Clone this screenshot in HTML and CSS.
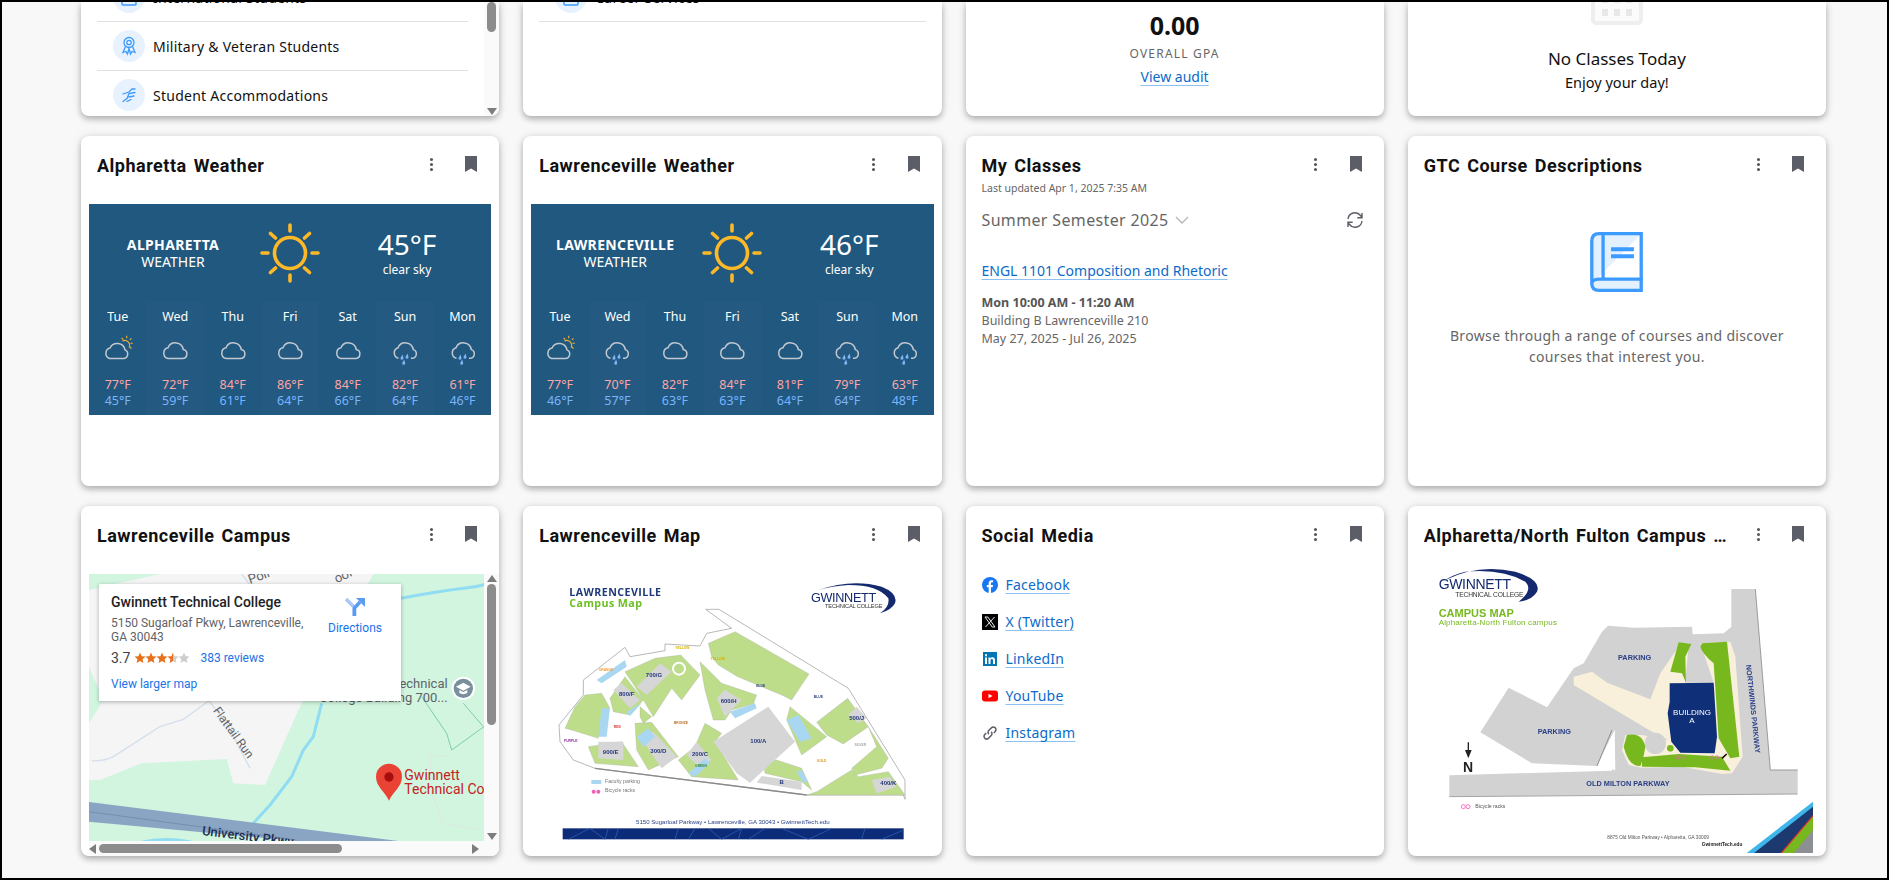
FILE: index.html
```html
<!DOCTYPE html>
<html>
<head>
    <meta charset="UTF-8">
    <title>Student Dashboard</title>
    <link rel="stylesheet" href="styles.css">
</head>
<body>
    <!-- shared icons -->
    <svg class="icon-defs" aria-hidden="true">
        <defs>
            <linearGradient id="halfStar">
                <stop offset="50%" stop-color="#e7711b"/>
                <stop offset="50%" stop-color="#ccc"/>
            </linearGradient>
            <symbol id="bookmark" viewBox="0 0 12 16"><path d="M0 0h12v16l-6-3.4L0 16z" fill="#5b5e66"/></symbol>
            <symbol id="sun" viewBox="0 0 60 60">
                <g fill="none" stroke="#fdb827" stroke-width="3.6" stroke-linecap="round">
                    <circle cx="30" cy="30" r="15.5"/>
                    <path d="M30 2v6M30 52v6M2 30h6M52 30h6M10.5 10.5l5 4.5M44.5 45l5 4.5M10.5 49.5l5-4.5M44.5 15l5-4.5"/>
                </g>
            </symbol>
            <symbol id="cloud" viewBox="0 0 30 30">
                <path d="M8 23.5h14.5a4.5 4.5 0 0 0 .8-8.9a8 8 0 0 0-15.3-1.8a5.5 5.5 0 0 0 0 10.7z" fill="none" stroke="#c2c8cf" stroke-width="1.5"/>
            </symbol>
            <symbol id="partly" viewBox="0 0 30 30">
                <g fill="none" stroke="#f2b233" stroke-width="1.1">
                    <path d="M19.5 6a4.8 4.8 0 0 1 6.500 6.500"/>
                    <path d="M23.7 .8v2.400M29.800 8.300h-2.400M18.600 3l1.600 1.600M28.500 3.300l-1.700 1.600M28.500 13.500l-1.700-1.500"/>
                </g>
                <path d="M6.500 23.500h14a4.500 4.500 0 0 0 1.500-8.600a8 8 0 0 0-15-1.900a5.500 5.500 0 0 0-.5 10.500z" fill="#20587f" stroke="#c2c8cf" stroke-width="1.5"/>
            </symbol>
            <symbol id="rain" viewBox="0 0 30 30">
                <path d="M8.500 23.200a5.400 5.400 0 0 1-.5-10.400a8 8 0 0 1 15.300 1.800a4.500 4.500 0 0 1-.8 8.700h-1.500" fill="none" stroke="#c2c8cf" stroke-width="1.5"/>
                <path d="M12.500 19.500l1 3.500a1.500 1.500 0 1 1-2.900-.3zM17.500 18.500l1 3.500a1.500 1.500 0 1 1-2.900-.3zM14.200 24.500l1 3.500a1.500 1.500 0 1 1-2.900-.3z" fill="#7fb4f5"/>
            </symbol>
            <symbol id="star" viewBox="0 0 12 12"><path d="M6 .6l1.600 3.600l3.900.4l-2.900 2.600l.8 3.900L6 9.100l-3.400 2l.8-3.900L.5 4.600l3.900-.4z"/></symbol>
        </defs>
    </svg>

    <div class="frame">
        <main class="dashboard">

            <!-- row cut off by the scroll position -->
            <section class="card card-cut">
                <div class="cut-row">
                    <ul class="link-list">
                        <li><span class="round-icon"><svg width="18" height="20" viewBox="0 0 18 20"><rect x="2" y="2" width="14" height="16" rx="1" fill="none" stroke="#3b9bff" stroke-width="1.5"/></svg></span>International Students</li>
                        <li><span class="round-icon"><svg width="16" height="20" viewBox="0 0 16 20" fill="none" stroke="#3b9bff" stroke-width="1.3"><circle cx="8" cy="6.5" r="5"/><circle cx="8" cy="6.5" r="2.2"/><path d="M4.500 10.500l-2.500 6l3-1l1.500 2.500l1.500-5.500l1.500 5.500l1.500-2.500l3 1l-2.500-6"/></svg></span>Military &amp; Veteran Students</li>
                        <li><span class="round-icon"><svg width="18" height="18" viewBox="0 0 18 18" fill="none" stroke="#3b9bff" stroke-width="1.3" stroke-linecap="round"><path d="M3 8l6-2l3-3l3 0M15 6.500l-6 1l-2 5l-4 3M9 11l5-1M7 15.500l4-2"/></svg></span>Student Accommodations</li>
                    </ul>
                    <div class="scrollbar-v">
                        <span class="thumb-v thumb-top"></span>
                        <span class="arrow-down"></span>
                    </div>
                </div>
            </section>

            <section class="card card-cut">
                <ul class="link-list">
                    <li><span class="round-icon"><svg width="18" height="20" viewBox="0 0 18 20"><rect x="2" y="2" width="14" height="16" rx="1" fill="none" stroke="#3b9bff" stroke-width="1.5"/></svg></span>Career Services</li>
                </ul>
            </section>

            <section class="card card-cut gpa">
                <div class="gpa-value">0.00</div>
                <div class="gpa-label">OVERALL GPA</div>
                <a class="link gpa-link" href="#">View audit</a>
            </section>

            <section class="card card-cut today">
                <svg class="today-icon" width="52" height="52" viewBox="0 0 52 52">
                    <rect x="2" y="2" width="48" height="48" rx="3" fill="#fbfbfb" stroke="#eeeeee" stroke-width="4"/>
                    <path d="M11 23h6v7h-6zM23 23h6v7h-6zM35 23h6v7h-6zM11 36h6v7h-6zM23 36h6v7h-6zM35 36h6v7h-6z" fill="#e8e8e8"/>
                </svg>
                <div class="today-title">No Classes Today</div>
                <div class="today-sub">Enjoy your day!</div>
            </section>

            <!-- weather row -->
            <section class="card">
                <header class="card-head">
                    <h2 class="card-title">Alpharetta Weather</h2>
                    <span class="head-btn"><span class="kebab"></span></span>
                    <span class="head-btn"><svg width="12" height="16"><use href="#bookmark"/></svg></span>
                </header>
                <div class="weather">
                    <div class="weather-now">
                        <div class="weather-place"><strong>ALPHARETTA</strong><span>WEATHER</span></div>
                        <svg width="60" height="60"><use href="#sun"/></svg>
                        <div class="weather-temp"><b>45°F</b><span>clear sky</span></div>
                    </div>
                    <div class="weather-days">
                        <div class="day"><span class="day-name">Tue</span><svg width="30" height="30"><use href="#partly"/></svg><span class="hi">77°F</span><span class="lo">45°F</span></div>
                        <div class="day"><span class="day-name">Wed</span><svg width="30" height="30"><use href="#cloud"/></svg><span class="hi">72°F</span><span class="lo">59°F</span></div>
                        <div class="day"><span class="day-name">Thu</span><svg width="30" height="30"><use href="#cloud"/></svg><span class="hi">84°F</span><span class="lo">61°F</span></div>
                        <div class="day"><span class="day-name">Fri</span><svg width="30" height="30"><use href="#cloud"/></svg><span class="hi">86°F</span><span class="lo">64°F</span></div>
                        <div class="day"><span class="day-name">Sat</span><svg width="30" height="30"><use href="#cloud"/></svg><span class="hi">84°F</span><span class="lo">66°F</span></div>
                        <div class="day"><span class="day-name">Sun</span><svg width="30" height="30"><use href="#rain"/></svg><span class="hi">82°F</span><span class="lo">64°F</span></div>
                        <div class="day"><span class="day-name">Mon</span><svg width="30" height="30"><use href="#rain"/></svg><span class="hi">61°F</span><span class="lo">46°F</span></div>
                    </div>
                </div>
            </section>

            <section class="card">
                <header class="card-head">
                    <h2 class="card-title">Lawrenceville Weather</h2>
                    <span class="head-btn"><span class="kebab"></span></span>
                    <span class="head-btn"><svg width="12" height="16"><use href="#bookmark"/></svg></span>
                </header>
                <div class="weather">
                    <div class="weather-now">
                        <div class="weather-place"><strong>LAWRENCEVILLE</strong><span>WEATHER</span></div>
                        <svg width="60" height="60"><use href="#sun"/></svg>
                        <div class="weather-temp"><b>46°F</b><span>clear sky</span></div>
                    </div>
                    <div class="weather-days">
                        <div class="day"><span class="day-name">Tue</span><svg width="30" height="30"><use href="#partly"/></svg><span class="hi">77°F</span><span class="lo">46°F</span></div>
                        <div class="day"><span class="day-name">Wed</span><svg width="30" height="30"><use href="#rain"/></svg><span class="hi">70°F</span><span class="lo">57°F</span></div>
                        <div class="day"><span class="day-name">Thu</span><svg width="30" height="30"><use href="#cloud"/></svg><span class="hi">82°F</span><span class="lo">63°F</span></div>
                        <div class="day"><span class="day-name">Fri</span><svg width="30" height="30"><use href="#cloud"/></svg><span class="hi">84°F</span><span class="lo">63°F</span></div>
                        <div class="day"><span class="day-name">Sat</span><svg width="30" height="30"><use href="#cloud"/></svg><span class="hi">81°F</span><span class="lo">64°F</span></div>
                        <div class="day"><span class="day-name">Sun</span><svg width="30" height="30"><use href="#rain"/></svg><span class="hi">79°F</span><span class="lo">64°F</span></div>
                        <div class="day"><span class="day-name">Mon</span><svg width="30" height="30"><use href="#rain"/></svg><span class="hi">63°F</span><span class="lo">48°F</span></div>
                    </div>
                </div>
            </section>

            <section class="card">
                <header class="card-head">
                    <div class="title-wrap">
                        <h2 class="card-title">My Classes</h2>
                        <div class="updated">Last updated Apr 1, 2025 7:35 AM</div>
                    </div>
                    <span class="head-btn"><span class="kebab"></span></span>
                    <span class="head-btn"><svg width="12" height="16"><use href="#bookmark"/></svg></span>
                </header>
                <div class="classes">
                    <div class="semester">
                        <span class="semester-name">Summer Semester 2025</span>
                        <svg width="14" height="8" viewBox="0 0 14 8"><path d="M1 1l6 6l6-6" fill="none" stroke="#b5b5b5" stroke-width="1.3"/></svg>
                        <svg class="refresh" width="18" height="18" viewBox="0 0 18 18" fill="none" stroke="#5b5e66" stroke-width="1.4"><path d="M2 8a7 7 0 0 1 12.500-3.500l1.500 2M16 2v4.700h-4.700"/><path d="M16 10a7 7 0 0 1-12.500 3.500L2 11.500M2 16v-4.700h4.700"/></svg>
                    </div>
                    <a class="link class-link" href="#">ENGL 1101 Composition and Rhetoric</a>
                    <div class="class-time">Mon 10:00 AM - 11:20 AM</div>
                    <div class="class-info">Building B Lawrenceville 210</div>
                    <div class="class-info">May 27, 2025 - Jul 26, 2025</div>
                </div>
            </section>

            <section class="card">
                <header class="card-head">
                    <h2 class="card-title">GTC Course Descriptions</h2>
                    <span class="head-btn"><span class="kebab"></span></span>
                    <span class="head-btn"><svg width="12" height="16"><use href="#bookmark"/></svg></span>
                </header>
                <div class="courses">
                    <svg width="53" height="60" viewBox="573 305 159 181">
                        <path d="M727 310H600Q578 310 578 332V460Q578 481 600 481H727V447H600Q578 447 578 462" fill="#e3f0ff" stroke="#3b9bff" stroke-width="10"/>
                        <path d="M727 305V450M612 310V447" stroke="#3b9bff" stroke-width="10" fill="none"/>
                        <path d="M636 351h69v12h-69zM636 372h69v12h-69z" fill="#3b9bff"/>
                    </svg>
                    <p>Browse through a range of courses and discover courses that interest you.</p>
                </div>
            </section>

            <!-- bottom row -->
            <section class="card">
                <header class="card-head">
                    <h2 class="card-title">Lawrenceville Campus</h2>
                    <span class="head-btn"><span class="kebab"></span></span>
                    <span class="head-btn"><svg width="12" height="16"><use href="#bookmark"/></svg></span>
                </header>
                <div class="map-frame">
                    <div class="map-view">
                        <svg class="map-art" width="395" height="267" viewBox="57 42 1185 801">
                            <rect x="57" y="42" width="1185" height="801" fill="#d1f5df"/>
                            <path d="M270 42H910L690 440L585 675L490 670L470 597L215 610L90 660H57V490L100 420L57 320V90z" fill="#f5f5f5"/>
                            <path d="M65 602Q100 605 130 590L270 500L340 478L420 420M415 420L470 490L540 625M515 42L540 75" fill="none" stroke="#d5dfec" stroke-width="4"/>
                            <path d="M993 115Q1100 95 1180 85T1242 68M755 430L730 530L700 570L665 650L600 735L550 790" fill="none" stroke="#8fdcf3" stroke-width="9"/>
                            <path d="M210 843Q290 825 370 843z" fill="#8fdcf3"/>
                            <path d="M1055 410L1130 520L1145 570L1242 500M1180 430L1240 500" fill="none" stroke="#6cc5a0" stroke-width="2.5"/>
                            <path d="M1080 585L1145 590M1080 585L1085 700L1110 760V790L1242 810" fill="none" stroke="#dfe8e2" stroke-width="3"/>
                            <path d="M57 726L985 843H680L57 785z" fill="#8aa5c4"/>
                            <path d="M57 755L680 840" stroke="#7189a8" stroke-width="2.5"/>
                            <text class="map-label" x="540" y="72" transform="rotate(-20 540 72)">Poll</text>
                            <text class="map-label" x="800" y="70" transform="rotate(-25 800 70)">ool</text>
                            <text class="map-label map-label-small" x="428" y="452" transform="rotate(54 428 452)">Flattail Run</text>
                            <text class="map-road" x="395" y="825" transform="rotate(7 395 825)">University Pkwy</text>
                            <text class="map-label" x="1133" y="385" text-anchor="end">Technical</text>
                            <text class="map-label" x="1133" y="426" text-anchor="end">College Building 700...</text>
                            <circle cx="1180" cy="385" r="35" fill="#fff"/>
                            <circle cx="1180" cy="385" r="29" fill="#78909c"/>
                            <path d="M1180 368L1202 380L1180 392L1158 380zM1168 390V399Q1180 406 1192 399V390L1180 396z" fill="#fff"/>
                            <path d="M957 722C945 695 918 680 918 650A39 39 0 0 1 996 650C996 680 969 695 957 722z" fill="#ea4335"/>
                            <circle cx="957" cy="651" r="14" fill="#a50e0e"/>
                            <text class="map-red" x="1003" y="660">Gwinnett</text>
                            <text class="map-red" x="1003" y="702">Technical College</text>
                        </svg>
                        <div class="map-info">
                            <div class="map-info-main">
                                <div class="place-name">Gwinnett Technical College</div>
                                <div class="place-addr">5150 Sugarloaf Pkwy, Lawrenceville, GA 30043</div>
                                <div class="place-rating">
                                    <span class="rating-num">3.7</span>
                                    <svg class="stars" width="55" height="12" viewBox="0 0 55 12">
                                        <use href="#star" width="12" height="12" fill="#e7711b"/>
                                        <use href="#star" x="11" width="12" height="12" fill="#e7711b"/>
                                        <use href="#star" x="22" width="12" height="12" fill="#e7711b"/>
                                        <use href="#star" x="33" width="12" height="12" fill="url(#halfStar)"/>
                                        <use href="#star" x="44" width="12" height="12" fill="#ccc"/>
                                    </svg>
                                    <a class="map-link" href="#">383 reviews</a>
                                </div>
                                <a class="map-link larger" href="#">View larger map</a>
                            </div>
                            <div class="directions">
                                <svg width="20" height="20" viewBox="0 0 20 20">
                                    <path d="M1 2L9 10V19" fill="none" stroke="#a8c7fa" stroke-width="3.5"/>
                                    <path d="M9.500 19V11L15 5" fill="none" stroke="#5b9cf0" stroke-width="3.5"/>
                                    <path d="M11 1h9v9z" fill="#5b9cf0"/>
                                </svg>
                                <a class="map-link" href="#">Directions</a>
                            </div>
                        </div>
                    </div>
                    <div class="scrollbar-v">
                        <span class="arrow-up"></span>
                        <span class="thumb-v thumb-map"></span>
                        <span class="arrow-down"></span>
                    </div>
                    <div class="scrollbar-h">
                        <span class="arrow-left"></span>
                        <span class="thumb-h"></span>
                        <span class="arrow-right"></span>
                    </div>
                </div>
            </section>

            <section class="card">
                <header class="card-head">
                    <h2 class="card-title">Lawrenceville Map</h2>
                    <span class="head-btn"><span class="kebab"></span></span>
                    <span class="head-btn"><svg width="12" height="16"><use href="#bookmark"/></svg></span>
                </header>
                <div class="map-image">
                    <svg width="403" height="288" viewBox="48 15 1209 864">
                        <text class="lv-head" x="163" y="108" fill="#1f3a7a">LAWRENCEVILLE</text>
                        <text class="lv-head" x="163" y="140" fill="#6cbf20">Campus Map</text>
                        <path d="M910 90Q1010 55 1100 80Q1150 100 1140 130Q1130 150 1095 160Q1125 140 1120 115Q1090 75 1000 75Q950 78 910 90z" fill="#14296e"/>
                        <text class="logo-big logo-lv" x="888" y="125">GWINNETT</text>
                        <text class="logo-small" x="930" y="145">TECHNICAL COLLEGE</text>

                        <path d="M572 148H612L1000 385L1170 660V718L1165 705H875L240 625L175 600L135 545L132 495L205 405V360L330 262L345 290L450 272V252L555 258L575 220L650 205z" fill="#fff" stroke="#a9a9a9" stroke-width="2.5"/>
                        <path d="M240 625L875 705" stroke="#8a8a8a" stroke-width="4"/>
                        <g fill="#bedd8a" stroke="#a9a9a9" stroke-width="1">
                            <path d="M580 250L660 215L882 342L830 420L800 405L668 350L610 315L590 290z"/>
                            <path d="M905 487L998 415L1060 500L985 552L935 525z"/>
                            <path d="M1060 500L1120 595L1100 625L1020 645L1010 625L1085 560z"/>
                            <path d="M905 695L1010 630L1030 650L1120 635L1170 705H875z"/>
                            <path d="M330 335L420 295L497 285L555 345L500 420L470 385L415 470L385 420L360 380z"/>
                            <path d="M555 305L620 370L725 405L715 432L650 450L630 480L595 480L570 390z"/>
                            <path d="M210 405L260 400L285 445L265 460L250 535L170 510L150 505L180 440z"/>
                            <path d="M285 415L330 350L385 420L345 465L295 455z"/>
                            <path d="M220 560L320 545L370 620L240 610z"/>
                            <path d="M360 490L410 487L490 590L400 630L365 570z"/>
                            <path d="M490 600L540 560L570 490L620 520L600 545L670 660L530 650z"/>
                            <path d="M825 440L935 530L860 585L815 480z"/>
                            <path d="M785 600L860 625L890 690L860 665L750 640L745 605z"/>
                            <path d="M375 440L410 470L385 490L375 470z"/>
                        </g>
                        <g fill="#d6d6d6">
                            <path d="M595 545L760 440L840 545L705 668L665 640z"/>
                            <path d="M740 648L860 665V690L725 668z"/>
                            <path d="M365 380L435 310L470 335L395 405z"/>
                            <path d="M295 390L320 370L375 420L345 445z"/>
                            <path d="M385 545L415 515L485 590L440 625z"/>
                            <path d="M250 545L325 545V600L250 595z"/>
                            <path d="M515 585L545 545L590 600L550 620z"/>
                            <path d="M605 415L630 390L680 420L630 470z"/>
                            <path d="M1000 465L1025 440L1055 475L1030 490z"/>
                            <path d="M1070 660L1125 650L1145 680L1085 700z"/>
                        </g>
                        <g fill="#a9d7f2">
                            <path d="M245 360L330 300L335 320L260 370z"/>
                            <path d="M260 445L285 445L275 530H250z"/>
                            <path d="M365 530L400 505L420 530L385 560z"/>
                            <path d="M815 480L850 465L890 535L855 545z"/>
                            <path d="M645 455L720 430L725 445L660 475z"/>
                            <path d="M520 640L570 595L585 610L540 650z"/>
                            <path d="M335 455L380 430L345 468z"/>
                            <path d="M845 635L860 630L878 665L865 668z"/>
                        </g>
                        <circle cx="492" cy="326" r="18" fill="#bedd8a" stroke="#fff" stroke-width="6"/>
                        <g class="lv-bld">
                            <text x="417" y="350" text-anchor="middle">700/G</text>
                            <text x="335" y="409" text-anchor="middle">800/F</text>
                            <text x="641" y="430" text-anchor="middle">600/H</text>
                            <text x="430" y="578" text-anchor="middle">300/D</text>
                            <text x="287" y="582" text-anchor="middle">900/E</text>
                            <text x="555" y="587" text-anchor="middle">200/C</text>
                            <text x="730" y="548" text-anchor="middle">100/A</text>
                            <text x="800" y="673" text-anchor="middle">B</text>
                            <text x="1025" y="479" text-anchor="middle">500/J</text>
                            <text x="1120" y="676" text-anchor="middle">400/K</text>
                        </g>
                        <g class="lv-lot">
                            <text x="910" y="413" fill="#2a3f85" text-anchor="middle">BLUE</text>
                            <text x="737" y="380" fill="#2a3f85" text-anchor="middle">BLUE</text>
                            <text x="502" y="267" fill="#d4b300" text-anchor="middle">YELLOW</text>
                            <text x="608" y="300" fill="#d4b300" text-anchor="middle">YELLOW</text>
                            <text x="273" y="332" fill="#f29d38" text-anchor="middle">ORANGE</text>
                            <text x="307" y="503" fill="#d9342b" text-anchor="middle">RED</text>
                            <text x="167" y="545" fill="#8a2aa0" text-anchor="middle">PURPLE</text>
                            <text x="498" y="491" fill="#b9712a" text-anchor="middle">BRONZE</text>
                            <text x="920" y="607" fill="#d79a28" text-anchor="middle">GOLD</text>
                            <text x="1036" y="558" fill="#a8a8a8" text-anchor="middle">SILVER</text>
                            <text x="558" y="620" fill="#3e8a30" text-anchor="middle">GREEN</text>
                        </g>
                        <path d="M229 660h30v12h-30z" fill="#a9d7f2"/>
                        <circle cx="236" cy="695" r="6" fill="#f35fb5"/><circle cx="250" cy="695" r="6" fill="#f35fb5"/>
                        <text class="lv-note" x="270" y="670">Faculty parking</text>
                        <text class="lv-note" x="270" y="696">Bicycle racks</text>
                        <text class="lv-addr" x="363" y="791">5150 Sugarloaf Parkway • Lawrenceville, GA 30043 • GwinnettTech.edu</text>
                        <rect x="143" y="805" width="1023" height="33" fill="#0c2b78"/>
                        <path d="M160 838L225 805L270 838L280 805M300 838L310 805M480 838L490 805M520 838L540 805M580 805L620 838L680 805L670 838M750 805L700 838M800 805L880 838L950 805M1040 838L1050 805M1100 838L1166 810" fill="none" stroke="#3468c0" stroke-width="2"/>
                    </svg>
                </div>
            </section>

            <section class="card">
                <header class="card-head">
                    <h2 class="card-title">Social Media</h2>
                    <span class="head-btn"><span class="kebab"></span></span>
                    <span class="head-btn"><svg width="12" height="16"><use href="#bookmark"/></svg></span>
                </header>
                <ul class="social">
                    <li>
                        <svg width="16" height="16" viewBox="0 0 16 16"><circle cx="8" cy="8" r="8" fill="#1877f2"/><path d="M6.700 16V10.300H4.800V8H6.700V6.200C6.700 4.300 7.800 3.200 9.500 3.200C10.300 3.200 11.100 3.400 11.100 3.400V5.200H10.200C9.300 5.200 9 5.800 9 6.400V8H11L10.700 10.300H9V16z" fill="#fff"/></svg>
                        <a class="link" href="#">Facebook</a>
                    </li>
                    <li>
                        <svg width="16" height="16" viewBox="0 0 16 16"><rect width="16" height="16" fill="#000"/><path d="M3 3h2.800l7.200 10h-2.800zM12.500 3L3.500 13" fill="none" stroke="#fff" stroke-width=".9"/></svg>
                        <a class="link" href="#">X (Twitter)</a>
                    </li>
                    <li>
                        <svg width="16" height="16" viewBox="0 0 16 16"><rect x="1" y="1" width="14" height="14" fill="#0077b5"/><path d="M3 6.500h2V13H3zM3 3.200h2v2H3zM6.500 6.500h1.900v.9C8.800 6.700 9.600 6.300 10.500 6.300C12.200 6.300 13 7.400 13 9.200V13h-2V9.600C11 8.600 10.600 8 9.800 8C8.900 8 8.500 8.700 8.500 9.600V13h-2z" fill="#fff"/></svg>
                        <a class="link" href="#">LinkedIn</a>
                    </li>
                    <li>
                        <svg width="16" height="16" viewBox="0 0 16 16"><rect y="2.500" width="16" height="11" rx="3" fill="#f00"/><path d="M6.500 5.800L10.500 8L6.500 10.200z" fill="#fff"/></svg>
                        <a class="link" href="#">YouTube</a>
                    </li>
                    <li>
                        <svg width="16" height="16" viewBox="0 0 16 16" fill="none" stroke="#5b5e66" stroke-width="1.5"><path d="M6.800 9.200a2.600 2.600 0 0 1 0-3.700l2.700-2.700a2.600 2.600 0 0 1 3.700 3.700l-1.400 1.400"/><path d="M9.200 6.800a2.600 2.600 0 0 1 0 3.700l-2.700 2.700a2.600 2.600 0 0 1-3.700-3.700l1.400-1.400"/></svg>
                        <a class="link" href="#">Instagram</a>
                    </li>
                </ul>
            </section>

            <section class="card">
                <header class="card-head">
                    <h2 class="card-title">Alpharetta/North Fulton Campus Map</h2>
                    <span class="head-btn"><span class="kebab"></span></span>
                    <span class="head-btn"><svg width="12" height="16"><use href="#bookmark"/></svg></span>
                </header>
                <div class="map-image map-image-alt">
                    <svg width="392" height="288" viewBox="57 195 1176 864">
                        <path d="M130 240Q230 190 340 215Q420 240 405 275Q390 300 350 305Q395 270 370 245Q300 205 190 215Q150 225 130 240z" fill="#14296e"/>
                        <text class="logo-big" x="110" y="268">GWINNETT</text>
                        <text class="logo-small logo-al" x="160" y="290">TECHNICAL COLLEGE</text>
                        <text class="al-head" x="110" y="350">CAMPUS MAP</text>
                        <text class="al-sub" x="110" y="375">Alpharetta-North Fulton campus</text>

                        <path d="M235 697L320 563L435 622L515 505L545 490L600 395L618 377L695 383L870 380L872 403L965 400L988 380V267H1060L1105 810H1187V882L142 890V826L630 812L638 690L585 798L390 790z" fill="#d2d2d2"/>
                        <path d="M1060 267L1105 810H1187" fill="none" stroke="#8c8c8c" stroke-width="2.5"/>
                        <path d="M142 890L1187 882" stroke="#a5a5a5" stroke-width="3"/>
                        <path d="M585 798L638 690L640 810z" fill="#fff"/>
                        <path d="M585 798L630 690" stroke="#8c8c8c" stroke-width="3"/>
                        <path d="M895 430L985 425L1000 470L1022 770L990 820L960 822L840 800L720 803L680 795L660 750L670 705L720 705L800 720L750 695L515 555V530L570 515L615 548L745 598L775 520L830 440L860 430L850 548H935z" fill="#f9f0db"/>
                        <circle cx="760" cy="730" r="32" fill="#d2d2d2"/>
                        <g fill="#77b81f">
                            <path d="M900 430L975 425L1012 770L985 775L950 715L935 490Q900 460 895 440z"/>
                            <path d="M720 772L830 762L960 770L985 812L880 802L720 800z"/>
                            <path d="M830 427L868 432L850 470L852 548L840 520L805 515z"/>
                            <path d="M675 705Q720 695 730 740Q725 775 715 798Q680 800 665 740z"/>
                            <circle cx="805" cy="745" r="10"/>
                        </g>
                        <path d="M803 550L935 548L945 710L938 760L835 758L808 725L797 640L803 605z" fill="#0f2f78"/>
                        <text class="al-bld" x="870" y="645" text-anchor="middle">BUILDING</text>
                        <text class="al-bld" x="870" y="669" text-anchor="middle">A</text>
                        <text class="al-road" x="648" y="480">PARKING</text>
                        <text class="al-road" x="407" y="702">PARKING</text>
                        <text class="al-road" x="553" y="857">OLD MILTON PARKWAY</text>
                        <text class="al-road" x="1032" y="495" transform="rotate(84 1032 495)">NORTHWINDS PARKWAY</text>
                        <path d="M199 727V760" stroke="#222" stroke-width="4"/>
                        <path d="M189 750L199 775L209 750z" fill="#222"/>
                        <text class="al-north" x="198" y="815" text-anchor="middle">N</text>
                        <circle cx="184" cy="920" r="6" fill="none" stroke="#f35fb5" stroke-width="2.5"/>
                        <circle cx="198" cy="920" r="6" fill="none" stroke="#f35fb5" stroke-width="2.5"/>
                        <circle cx="828" cy="772" r="5" fill="none" stroke="#f35fb5" stroke-width="2"/>
                        <circle cx="842" cy="772" r="5" fill="none" stroke="#f35fb5" stroke-width="2"/>
                        <circle cx="931" cy="772" r="5" fill="none" stroke="#f35fb5" stroke-width="2"/>
                        <circle cx="945" cy="772" r="5" fill="none" stroke="#f35fb5" stroke-width="2"/>
                        <path d="M960 775L974 762" stroke="#111" stroke-width="5"/>
                        <text class="al-note al-rack" x="220" y="923">Bicycle racks</text>
                        <text class="al-note" x="616" y="1016">8875 Old Milton Parkway • Alpharetta, GA 30009</text>
                        <text class="al-note al-web" x="1021" y="1037" text-anchor="end">GwinnettTech.edu</text>
                        <path d="M1033 1060L1233 905V1060z" fill="#3fb6ea"/>
                        <path d="M1055 1060L1233 920V1060z" fill="#1c3a70"/>
                        <path d="M1135 1060L1233 945V1060z" fill="#e5352b"/>
                        <path d="M1140 1060L1233 950V1060z" fill="#77b81f"/>
                        <path d="M1175 1060L1233 990V1060z" fill="#8c8f94"/>
                    </svg>
                </div>
            </section>

        </main>
    </div>
</body>
</html>
```

FILE: styles.css
```css
* {
    box-sizing: border-box;
}

html, body {
    margin: 0;
    padding: 0;
    height: 100%;
    overflow: hidden;
}

body {
    font-family: 'Noto Sans', 'Open Sans', sans-serif;
    color: #111;
    background-color: #000;
}

.icon-defs {
    position: absolute;
    width: 0;
    height: 0;
}

.frame {
    height: 100vh;
    border: 2px solid #000;
    background-color: #f8f8f8;
    overflow: hidden;
}

.dashboard {
    display: grid;
    grid-template-columns: repeat(4, 1fr);
    grid-template-rows: 114px 350px 350px;
    gap: 20px 24px;
    padding: 0 61px 0 79px;
}

.card {
    display: flex;
    flex-direction: column;
    min-width: 0;
    background-color: #fff;
    border-radius: 8px;
    box-shadow: 0 3px 6px rgba(0, 0, 0, 0.28), 0 0 12px rgba(0, 0, 0, 0.07);
    overflow: hidden;
}

.card-cut {
    border-radius: 0 0 8px 8px;
}

/* card header */
.card-head {
    display: flex;
    align-items: flex-start;
    flex: none;
    height: 68px;
    padding: 16px 8px 0 16px;
}

.title-wrap {
    flex: 1;
    min-width: 0;
}

.card-title {
    flex: 1;
    min-width: 0;
    margin: 0;
    font-family: Roboto, sans-serif;
    font-size: 18px;
    font-weight: 700;
    line-height: 27px;
    letter-spacing: 0.5px;
    word-spacing: 2px;
    white-space: nowrap;
    overflow: hidden;
    text-overflow: ellipsis;
}

.head-btn {
    display: flex;
    flex: none;
    align-items: center;
    justify-content: center;
    width: 40px;
    height: 24px;
}

.kebab {
    width: 3px;
    height: 3px;
    border-radius: 50%;
    background-color: #555;
    box-shadow: 0 -5px 0 #555, 0 5px 0 #555;
}

.updated {
    margin-top: 2px;
    font-size: 10.5px;
    line-height: 14px;
    color: #666;
}

/* scrollbars */
.scrollbar-v {
    position: relative;
    flex: none;
    width: 15px;
    background-color: #fafafa;
}

.thumb-v {
    position: absolute;
    left: 3px;
    width: 9px;
    border-radius: 5px;
    background-color: #8c8c8c;
}

.thumb-top {
    top: 0;
    height: 30px;
}

.arrow-down,
.arrow-up,
.arrow-left,
.arrow-right {
    position: absolute;
    width: 0;
    height: 0;
    border: 5px solid transparent;
}

.arrow-down {
    left: 2.5px;
    bottom: 1px;
    border-top: 7px solid #7d7d7d;
    border-bottom: 0;
}

.arrow-up {
    left: 2.5px;
    top: 1px;
    border-bottom: 7px solid #7d7d7d;
    border-top: 0;
}

/* first row */
.cut-row {
    display: flex;
    flex: 1;
    min-height: 0;
}

.link-list {
    flex: 1;
    min-width: 0;
    list-style: none;
    margin: -29px 16px 0 16px;
    padding: 0;
}

.link-list li {
    display: flex;
    align-items: center;
    gap: 8px;
    height: 49px;
    padding-left: 16px;
    border-bottom: 1px solid #e0e0e0;
    font-size: 14px;
    letter-spacing: 0.25px;
}

.round-icon {
    display: flex;
    flex: none;
    align-items: center;
    justify-content: center;
    width: 32px;
    height: 32px;
    border-radius: 50%;
    background-color: #e7f2fe;
}

.gpa,
.today {
    align-items: center;
    text-align: center;
}

.gpa-value {
    margin-top: 7px;
    font-size: 25px;
    font-weight: 700;
    line-height: 32px;
}

.gpa-label {
    margin-top: 4px;
    font-size: 12px;
    line-height: 18px;
    letter-spacing: 1.2px;
    color: #666;
}

.gpa-link {
    margin-top: 4px;
    font-size: 14px;
    line-height: 20px;
}

.link {
    color: #0b6bcb;
    text-decoration: underline;
    text-decoration-color: #8fc1f0;
    text-underline-offset: 3px;
}

.today-icon {
    flex: none;
    margin-top: -29px;
}

.today-title {
    margin-top: 22px;
    font-size: 17px;
    line-height: 24px;
}

.today-sub {
    margin-top: 1px;
    font-size: 14.5px;
    line-height: 20px;
}

/* weather */
.weather {
    margin: 0 8px;
    height: 211px;
    background-color: #20587f;
    color: #fff;
}

.weather-now {
    display: grid;
    grid-template-columns: 168px 66px 168px;
    align-items: center;
    justify-items: center;
    height: 98px;
}

.weather-place {
    display: flex;
    flex-direction: column;
    align-items: center;
    font-size: 14px;
    line-height: 17px;
}

.weather-place strong {
    letter-spacing: 0.35px;
}

.weather-temp {
    display: flex;
    flex-direction: column;
    align-items: center;
}

.weather-temp b {
    font-size: 28px;
    font-weight: 400;
    line-height: 34px;
}

.weather-temp span {
    font-size: 12px;
    line-height: 18px;
}

.weather-days {
    display: grid;
    grid-template-columns: repeat(7, 1fr);
    height: 113px;
}

.day {
    display: flex;
    flex-direction: column;
    align-items: center;
    padding-top: 5px;
    font-size: 12.5px;
}

.day:nth-child(even) {
    background-color: #245a81;
}

.day-name {
    line-height: 20px;
}

.day svg {
    margin: 8px 0 12px;
}

.hi,
.lo {
    line-height: 16px;
}

.hi {
    color: #ffa5a5;
}

.lo {
    color: #7ab4ff;
}

/* my classes */
.classes {
    padding: 0 16px;
    font-size: 12.5px;
    color: #666;
}

.semester {
    display: flex;
    align-items: center;
    gap: 6px;
    margin-top: 4px;
    height: 24px;
}

.semester-name {
    font-size: 16px;
    letter-spacing: 0.35px;
    color: #666;
}

.refresh {
    margin-left: auto;
    margin-right: 4px;
}

.class-link {
    display: block;
    margin-top: 29px;
    width: fit-content;
    font-size: 14px;
    line-height: 20px;
}

.class-time {
    margin-top: 13px;
    font-weight: 700;
    line-height: 18px;
    color: #555;
}

.class-info {
    line-height: 18px;
}

/* course descriptions */
.courses {
    display: flex;
    flex: none;
    flex-direction: column;
    align-items: center;
    margin-top: 28px;
    text-align: center;
    color: #666;
}

.courses svg {
    flex: none;
}

.courses p {
    width: 360px;
    margin: 33px 0 0;
    font-size: 14px;
    line-height: 21px;
    letter-spacing: 0.35px;
}

/* google map */
.map-frame {
    display: grid;
    grid-template-columns: 395px 15px;
    grid-template-rows: 267px 15px;
    margin-left: 8px;
}

.map-view {
    position: relative;
    overflow: hidden;
    font-family: Roboto, sans-serif;
}

.map-art {
    display: block;
}

.map-label {
    font-family: Roboto, sans-serif;
    font-size: 39px;
    fill: #5f6368;
}

.map-label-small {
    font-size: 36px;
}

.map-road {
    font-family: Roboto, sans-serif;
    font-size: 39px;
    font-weight: 500;
    fill: #1d2f52;
}

.map-red {
    font-family: Roboto, sans-serif;
    font-size: 42px;
    fill: #c5221f;
}

.map-info {
    position: absolute;
    top: 10px;
    left: 10px;
    display: flex;
    width: 302px;
    height: 117px;
    padding: 9px 12px;
    background-color: #fff;
    box-shadow: 0 1px 4px rgba(0, 0, 0, 0.3);
    font-size: 12px;
    color: #5f6368;
}

.map-info-main {
    flex: none;
    width: 210px;
}

.place-name {
    font-size: 14px;
    font-weight: 500;
    line-height: 18px;
    color: #202124;
}

.place-addr {
    max-width: 200px;
    margin-top: 5px;
    line-height: 14px;
}

.place-rating {
    display: flex;
    align-items: center;
    gap: 4px;
    margin-top: 5px;
    height: 18px;
}

.rating-num {
    font-size: 14px;
    color: #3c4043;
}

.stars {
    margin-right: 7px;
}

.map-link {
    color: #1a73e8;
    text-decoration: none;
}

.larger {
    display: block;
    margin-top: 10px;
    line-height: 14px;
}

.directions {
    display: flex;
    flex-direction: column;
    align-items: center;
    gap: 4px;
    flex: 1;
    padding-top: 4px;
}

.thumb-map {
    top: 10px;
    height: 141px;
}

.scrollbar-h {
    position: relative;
    grid-column: 1 / span 2;
    background-color: #fafafa;
}

.thumb-h {
    position: absolute;
    top: 3px;
    left: 10px;
    width: 243px;
    height: 9px;
    border-radius: 5px;
    background-color: #8c8c8c;
}

.arrow-left {
    left: 0;
    top: 2.5px;
    border-right: 7px solid #7d7d7d;
    border-left: 0;
}

.arrow-right {
    left: 383px;
    top: 2.5px;
    border-left: 7px solid #7d7d7d;
    border-right: 0;
}

/* campus map pictures */
.map-image {
    display: flex;
    justify-content: center;
    margin-top: -9px;
}

.map-image svg {
    flex: none;
    font-family: 'Liberation Sans', sans-serif;
    filter: blur(0.3px);
}

.lv-head {
    font-family: 'Open Sans', sans-serif;
    font-size: 32px;
    font-weight: 700;
    letter-spacing: 1.3px;
}

.logo-big {
    font-family: 'Liberation Sans', sans-serif;
    font-size: 42px;
    letter-spacing: -1px;
    fill: #14296e;
}

.logo-lv {
    font-size: 38px;
}

.logo-small {
    font-family: 'Liberation Sans', sans-serif;
    font-size: 17px;
    letter-spacing: -0.5px;
    fill: #333;
}

.logo-al {
    font-size: 20px;
}

.lv-bld text {
    font-size: 18px;
    font-weight: 700;
    fill: #26377a;
}

.lv-lot text {
    font-size: 10px;
    font-weight: 700;
}

.lv-note {
    font-size: 15.5px;
    fill: #777;
}

.lv-addr {
    font-size: 18.3px;
    fill: #2a3f85;
}

.al-head {
    font-size: 33px;
    font-weight: 700;
    fill: #77b81f;
}

.al-sub {
    font-size: 24px;
    letter-spacing: 0.5px;
    fill: #77b81f;
}

.al-bld {
    font-size: 24px;
    fill: #fff;
}

.al-road {
    font-size: 22px;
    font-weight: 700;
    fill: #2a3f85;
}

.al-north {
    font-size: 42px;
    font-weight: 700;
    fill: #222;
}

.al-note {
    font-size: 14.2px;
    fill: #555;
}

.al-rack {
    font-size: 15.5px;
}

.al-web {
    font-weight: 700;
    fill: #222;
}

/* social */
.social {
    list-style: none;
    margin: -8px 0 0;
    padding: 0 16px;
}

.social li {
    display: flex;
    align-items: center;
    gap: 8px;
    height: 37px;
    font-size: 14px;
    letter-spacing: 0.2px;
}

.social svg {
    flex: none;
}
```
